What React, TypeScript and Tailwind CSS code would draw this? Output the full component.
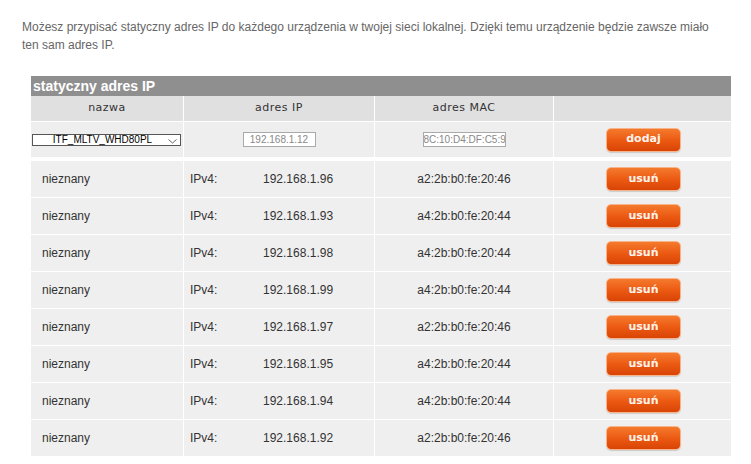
const rows = [
  { name: "nieznany", ip: "192.168.1.96", mac: "a2:2b:b0:fe:20:46" },
  { name: "nieznany", ip: "192.168.1.93", mac: "a4:2b:b0:fe:20:44" },
  { name: "nieznany", ip: "192.168.1.98", mac: "a4:2b:b0:fe:20:44" },
  { name: "nieznany", ip: "192.168.1.99", mac: "a4:2b:b0:fe:20:44" },
  { name: "nieznany", ip: "192.168.1.97", mac: "a2:2b:b0:fe:20:46" },
  { name: "nieznany", ip: "192.168.1.95", mac: "a4:2b:b0:fe:20:44" },
  { name: "nieznany", ip: "192.168.1.94", mac: "a4:2b:b0:fe:20:44" },
  { name: "nieznany", ip: "192.168.1.92", mac: "a2:2b:b0:fe:20:46" },
];

const cols = "grid grid-cols-[152px_190px_178px_177px] gap-x-px";

function OrangeButton({ label }: { label: string }) {
  return (
    <button
      type="button"
      className="h-[24px] w-[75px] rounded-[5px] border border-[#f7b48a] bg-gradient-to-b from-[#f47a2c] via-[#ec5a12] to-[#d94406] text-[11px] font-bold text-[#fff4ee] shadow-[0_1px_1px_rgba(0,0,0,0.15)] [font-family:'DejaVu_Sans',Verdana,sans-serif]"
    >
      {label}
    </button>
  );
}

export default function App() {
  return (
    <div className="min-h-[464px] w-[751px] bg-white [font-family:'Liberation_Sans',Arial,sans-serif]">
      <p className="whitespace-nowrap pl-[22px] pt-[18px] text-[12px] leading-[18px] text-[#666]">
        Możesz przypisać statyczny adres IP do każdego urządzenia w twojej sieci lokalnej. Dzięki temu urządzenie będzie zawsze miało
        <br />
        ten sam adres IP.
      </p>

      <div className="ml-[31px] mt-[22px] w-[700px]">
        <div className="flex h-[20px] items-center bg-[#8f8f8f] pl-[2px] text-[14px] font-bold text-white">
          statyczny adres IP
        </div>

        <div className={`${cols} h-[25px] text-[11px] tracking-[0.5px] text-[#333] [font-family:'DejaVu_Sans',Verdana,sans-serif]`}>
          <div className="flex items-center justify-center bg-[#e0e0e0]">nazwa</div>
          <div className="flex items-center justify-center bg-[#e0e0e0]">adres IP</div>
          <div className="flex items-center justify-center bg-[#e0e0e0]">adres MAC</div>
          <div className="bg-[#e0e0e0]" />
        </div>

        <div className={`${cols} mt-px h-[35px]`}>
          <div className="flex items-center bg-[#efeeee] pl-[1px]">
            <div className="relative flex h-[12px] w-[149px] items-center justify-center border border-[#555] bg-white text-[10px] leading-none text-black">
              <span className="pr-[8px]">ITF_MLTV_WHD80PL</span>
              <svg className="absolute right-[3px] top-[4px]" width="9" height="5" viewBox="0 0 9 5">
                <path d="M0.5 0.5 L4.5 4 L8.5 0.5" fill="none" stroke="#666" strokeWidth="1" />
              </svg>
            </div>
          </div>
          <div className="flex items-center justify-center bg-[#efeeee]">
            <div className="flex h-[15px] w-[73px] items-center justify-center border border-[#a9a9a9] bg-white text-[10px] text-[#888]">
              192.168.1.12
            </div>
          </div>
          <div className="flex items-center justify-center bg-[#efeeee]">
            <div className="flex h-[15px] w-[83px] items-center overflow-hidden border border-[#a9a9a9] bg-white text-[10px] text-[#888]">
              <span className="whitespace-nowrap">8C:10:D4:DF:C5:9</span>
            </div>
          </div>
          <div className="flex items-center justify-center bg-[#efeeee] pl-[2px]">
            <OrangeButton label="dodaj" />
          </div>
        </div>

        <div className="mt-[4px] flex flex-col gap-y-px">
          {rows.map((r, i) => (
            <div key={i} className={`${cols} h-[36px] text-[12px] text-[#333]`}>
              <div className="flex items-center bg-[#f0efef] pl-[11px]">{r.name}</div>
              <div className="flex items-center bg-[#f0efef] pl-[6px]">
                <span className="w-[73px]">IPv4:</span>
                <span>{r.ip}</span>
              </div>
              <div className="flex items-center justify-center bg-[#f0efef]">{r.mac}</div>
              <div className="flex items-center justify-center bg-[#f0efef] pl-[2px]">
                <OrangeButton label="usuń" />
              </div>
            </div>
          ))}
        </div>
      </div>
    </div>
  );
}
